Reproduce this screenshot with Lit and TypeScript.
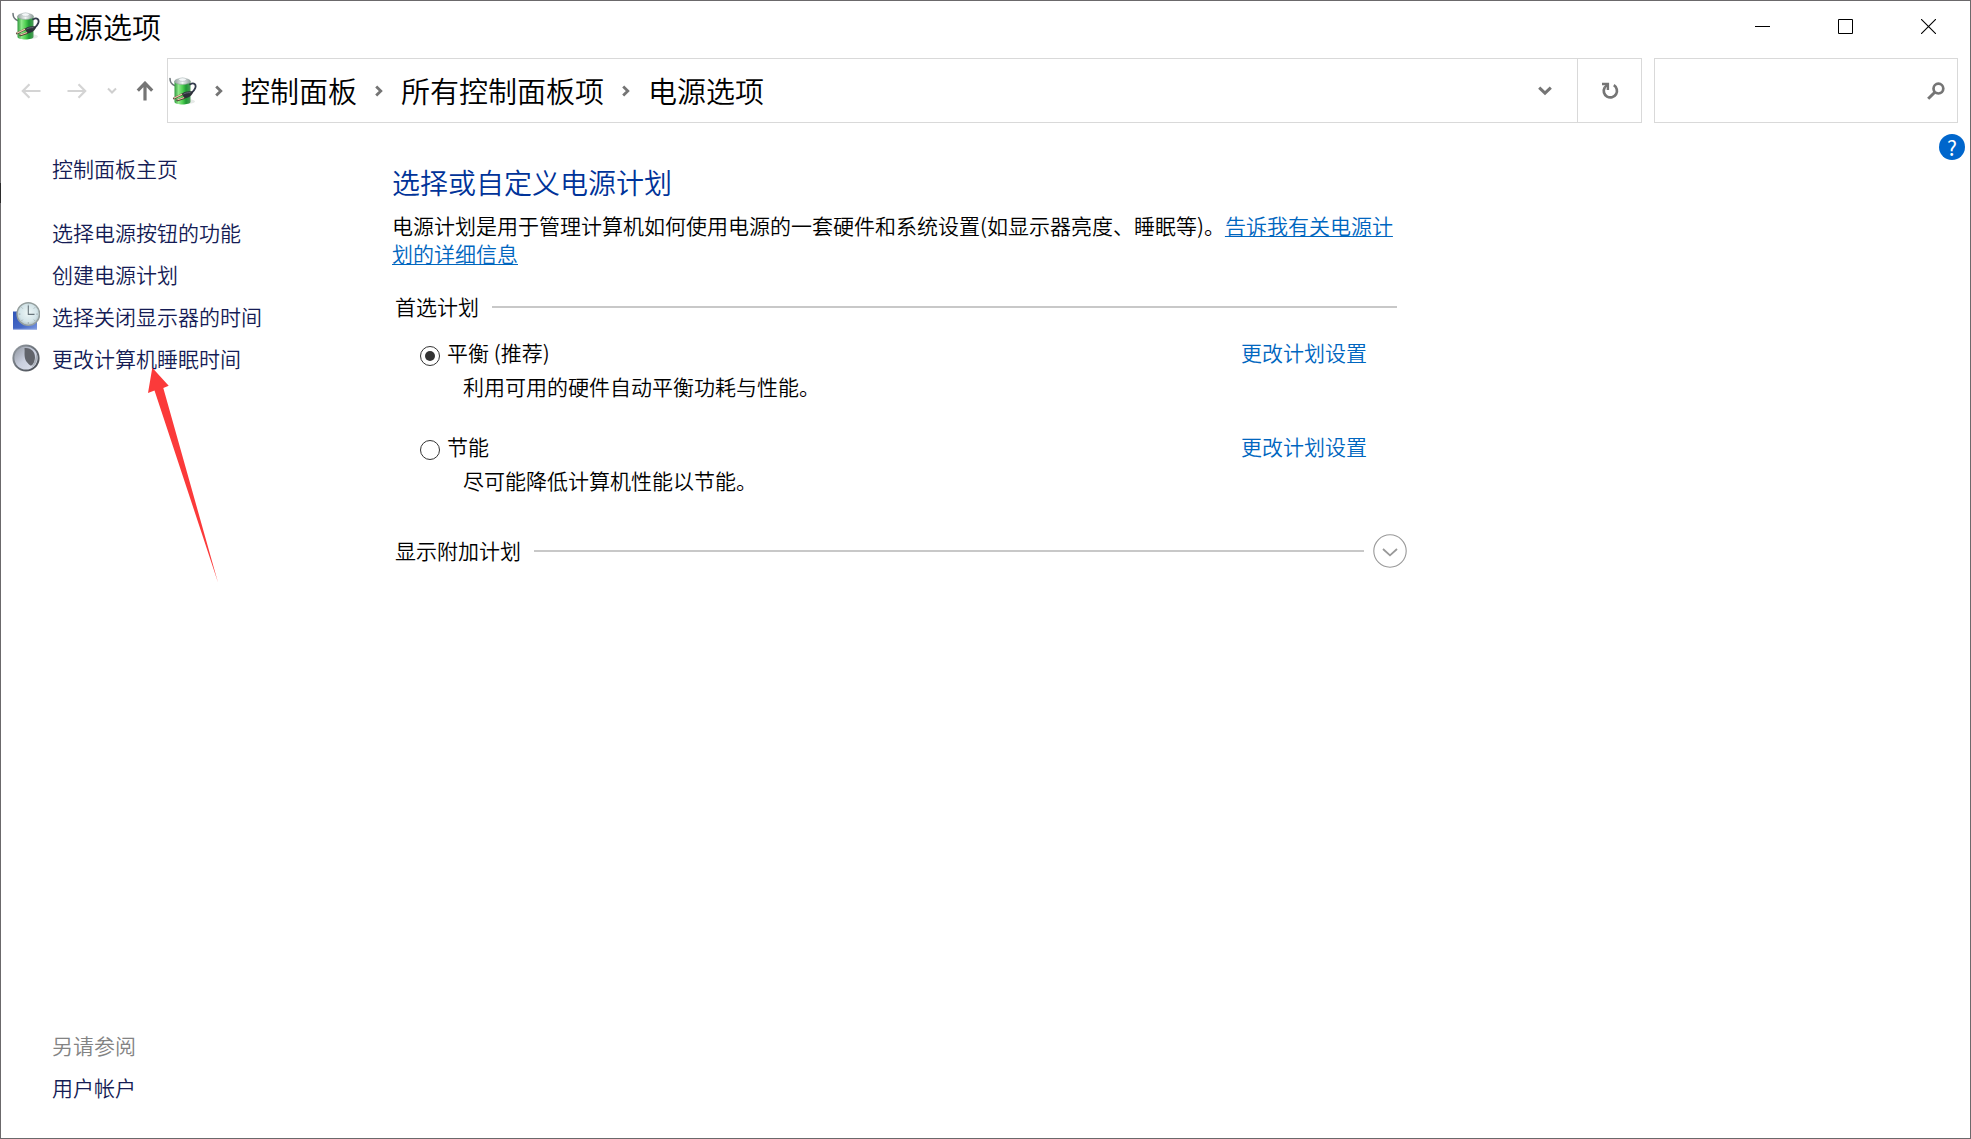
import { LitElement, html, css } from "lit";
import { customElement, state } from "lit/decorators.js";

interface Plan {
  id: string;
  name: string;
  description: string;
}

const PLANS: Plan[] = [
  { id: "balanced", name: "平衡 (推荐)", description: "利用可用的硬件自动平衡功耗与性能。" },
  { id: "saver", name: "节能", description: "尽可能降低计算机性能以节能。" },
];

const CRUMBS = ["控制面板", "所有控制面板项", "电源选项"];

const powerIcon = (uid: string) => html`
  <svg width="28" height="28" viewBox="0 0 28 28" aria-hidden="true">
    <defs>
      <linearGradient id=${"body-" + uid} x1="0" x2="1" y1="0" y2="0">
        <stop offset="0" stop-color="#2f9a3c" />
        <stop offset="0.25" stop-color="#8fe88a" />
        <stop offset="0.5" stop-color="#4fd052" />
        <stop offset="0.72" stop-color="#1f9a34" />
        <stop offset="1" stop-color="#4c9a58" />
      </linearGradient>
      <linearGradient id=${"cap-" + uid} x1="0" x2="1" y1="0" y2="0">
        <stop offset="0" stop-color="#8fa09a" />
        <stop offset="0.5" stop-color="#f2f6f5" />
        <stop offset="1" stop-color="#8c9a98" />
      </linearGradient>
    </defs>
    <ellipse cx="20" cy="24.5" rx="6" ry="2.2" fill="#e6e9e7" />
    <path d="M1 1.5C1 5 3 7.5 5.6 8.5" fill="none" stroke="#6c7478" stroke-width="1.5" stroke-linecap="round" />
    <path d="M5.5 4.5V24.8C5.5 28.4 21.5 28.4 21.5 24.8V4.5Z" fill=${"url(#body-" + uid + ")"} />
    <ellipse cx="13.5" cy="4.4" rx="8" ry="3" fill=${"url(#cap-" + uid + ")"} stroke="#93a19d" stroke-width="0.6" />
    <ellipse cx="13.5" cy="2.6" rx="3.8" ry="1.8" fill="#f4f7f8" stroke="#a5b1b1" stroke-width="0.5" />
    <path d="M21 7.4C25 5 27.6 7.6 26.2 11.2C25.3 13.4 24.6 14.4 22.5 16" fill="none" stroke="#333a4c" stroke-width="1.8" stroke-linecap="round" />
    <path d="M12.8 17C15 14.5 20 13.8 24 14.8C23.6 18 20.2 21 15.8 21.4Z" fill="#2d3038" />
    <path d="M14.4 17.2C16.2 15.9 19 15.5 21.5 15.7" fill="none" stroke="#727985" stroke-width="0.8" />
    <path d="M13 17.4L5 21.4M15 21L8.4 23.2" fill="none" stroke="#4b3a30" stroke-width="2.1" stroke-linecap="round" />
    <path d="M12.6 17.4L5.2 21M14.6 20.7L8.8 22.7" fill="none" stroke="#ecc9aa" stroke-width="1.2" stroke-linecap="round" />
  </svg>
`;

const clockIcon = html`
  <svg width="28" height="28" viewBox="0 0 28 28" aria-hidden="true">
    <defs>
      <linearGradient id="screen" x1="0" x2="1" y1="0" y2="1">
        <stop offset="0" stop-color="#2f55b8" />
        <stop offset="0.6" stop-color="#4669c6" />
        <stop offset="1" stop-color="#7f9be0" />
      </linearGradient>
      <radialGradient id="dial" cx="0.5" cy="0.45" r="0.55">
        <stop offset="0" stop-color="#eef7f7" />
        <stop offset="0.7" stop-color="#d3e4e8" />
        <stop offset="1" stop-color="#aebec3" />
      </radialGradient>
    </defs>
    <path d="M1 9.5H25V27.5H1Z" fill="url(#screen)" />
    <path d="M1 27.3H25" stroke="#9fb2e4" stroke-width="1" />
    <circle cx="16.3" cy="12.1" r="11.3" fill="url(#dial)" stroke="#959f9e" stroke-width="1.4" />
    <path d="M16.3 2.6V4.2M16.3 20.2V21.8M6.8 12.1H8.4M24.2 12.1H25.8M9.6 5.4L10.7 6.5M23 5.4L21.9 6.5M9.6 18.8L10.7 17.7M23 18.8L21.9 17.7" stroke="#8f9ca1" stroke-width="0.8" />
    <path d="M16.3 3.8V12.4H22.5" fill="none" stroke="#67747a" stroke-width="1.1" />
  </svg>
`;

const moonIcon = html`
  <svg width="28" height="28" viewBox="0 0 28 28" aria-hidden="true">
    <defs>
      <linearGradient id="rim" x1="0" x2="1" y1="0" y2="1">
        <stop offset="0" stop-color="#9aa1a8" />
        <stop offset="0.5" stop-color="#6a7078" />
        <stop offset="1" stop-color="#42474d" />
      </linearGradient>
      <linearGradient id="moon" x1="0" x2="1" y1="0" y2="1">
        <stop offset="0" stop-color="#8f959e" />
        <stop offset="0.5" stop-color="#c9cfde" />
        <stop offset="1" stop-color="#dfe3ee" />
      </linearGradient>
    </defs>
    <circle cx="14" cy="14" r="13.6" fill="url(#rim)" />
    <circle cx="14" cy="14" r="11.6" fill="url(#moon)" />
    <path d="M12.4 4.2C19 3.4 23.2 8 23 13.6C22.7 18.4 21 21 19 21.8C15.6 19.2 12.8 16.6 12.6 11.4C12.4 8.8 12.9 6.4 12.4 4.2Z" fill="#61646b" />
    <path d="M24.4 9.2C26.2 14.6 24.4 20.8 19.4 23.6C22 19.6 23.6 15 24.4 9.2Z" fill="#a9afb8" />
  </svg>
`;

const TASKS = [
  { text: "选择电源按钮的功能", icon: null },
  { text: "创建电源计划", icon: null },
  { text: "选择关闭显示器的时间", icon: clockIcon },
  { text: "更改计算机睡眠时间", icon: moonIcon },
];

const crumbChevron = html`
  <svg class="crumb-sep" width="8" height="12" viewBox="0 0 8 12" aria-hidden="true">
    <path d="M1.2 1.4L5.8 6L1.2 10.6" fill="none" stroke="#757575" stroke-width="2.8" />
  </svg>
`;

@customElement("app-root")
export class AppRoot extends LitElement {
  @state() private selected = "balanced";

  static styles = css`
    :host {
      display: block;
      font-family: "Noto Sans CJK SC", sans-serif;
      font-size: 21px;
      font-weight: 350;
      line-height: 28px;
      color: #000;
    }
    * {
      box-sizing: border-box;
    }
    button,
    input {
      font: inherit;
      color: inherit;
      background: none;
      border: 0;
      margin: 0;
      padding: 0;
    }
    svg {
      display: block;
      flex: none;
    }
    a {
      color: #0066bf;
      text-decoration: none;
    }
    .window {
      position: relative;
      display: flex;
      flex-direction: column;
      min-height: 100vh;
      background: #fff;
      border: 1px solid #6b696b;
    }
    .edge {
      position: absolute;
      left: -1px;
      top: 182px;
      width: 1px;
      height: 20px;
      background: #2b2b2b;
    }
    .titlebar {
      display: flex;
      align-items: center;
      height: 50px;
      padding-left: 11px;
    }
    .title {
      flex: 1;
      margin: 0 0 0 5px;
      font-size: 29px;
      line-height: 40px;
    }
    .caption {
      display: flex;
      align-items: center;
      justify-content: center;
      width: 83px;
      height: 50px;
    }
    .navbar {
      display: flex;
      align-items: stretch;
      height: 65px;
      margin-top: 7px;
      padding: 0 12px 0 7px;
    }
    .nav {
      display: flex;
      align-items: center;
      justify-content: center;
      width: 46px;
    }
    .nav.recent {
      width: 23px;
    }
    .nav.up {
      width: 44px;
    }
    .address {
      flex: 1;
      display: flex;
      align-items: center;
      border: 1px solid #d9d9d9;
      padding-left: 1px;
    }
    .crumbs {
      flex: 1;
      display: flex;
      align-items: center;
      margin: 0;
      padding: 0;
      list-style: none;
    }
    .crumbs li {
      display: flex;
      align-items: center;
    }
    .crumb-sep {
      margin: 0 18px;
    }
    .crumbs button {
      padding-bottom: 2px;
      font-size: 29px;
      line-height: 40px;
    }
    .drop,
    .refresh {
      display: flex;
      align-items: center;
      justify-content: center;
      width: 64px;
      height: 100%;
    }
    .refresh {
      border-left: 1px solid #d9d9d9;
    }
    .search {
      display: flex;
      align-items: center;
      width: 304px;
      margin-left: 12px;
      padding-right: 12px;
      border: 1px solid #d9d9d9;
    }
    .search input {
      flex: 1;
      min-width: 0;
      height: 100%;
      padding: 0 12px;
      outline: none;
    }
    .body {
      flex: 1;
      display: flex;
    }
    .sidebar {
      display: flex;
      flex-direction: column;
      justify-content: space-between;
      width: 391px;
      padding: 24px 0 30px 11px;
    }
    .sidebar a,
    .also {
      display: flex;
      align-items: center;
      height: 42px;
      margin: 0;
      padding-left: 40px;
      color: #151c55;
    }
    .sidebar .with-icon {
      gap: 12px;
      padding-left: 0;
    }
    .sidebar .home {
      margin-bottom: 22px;
    }
    .sidebar .also {
      color: #838383;
    }
    .main {
      flex: 1;
      max-width: 1015px;
      padding-top: 39px;
    }
    h1 {
      margin: 0 0 9px;
      font-size: 28px;
      line-height: 40px;
      font-weight: inherit;
      color: #003399;
    }
    .intro {
      margin: 0 10px 26px 0;
    }
    .intro a {
      text-decoration: underline;
      text-decoration-thickness: 1px;
      text-underline-offset: 2px;
    }
    .group {
      display: flex;
      align-items: center;
      gap: 13px;
      padding-left: 3px;
    }
    .group h2 {
      margin: 0;
      padding-bottom: 2px;
      font-size: 21px;
      line-height: 26px;
      font-weight: inherit;
    }
    .rule {
      flex: 1;
      height: 2px;
      background: #c8c8c8;
    }
    .preferred {
      padding-right: 10px;
    }
    .plans {
      display: flex;
      flex-direction: column;
      gap: 32px;
      margin: 0;
      border: 0;
      padding: 17px 40px 40px 28px;
    }
    .plan {
      display: grid;
      grid-template-columns: 20px 1fr auto;
      column-gap: 7px;
      row-gap: 6px;
      align-items: center;
    }
    .plan input {
      appearance: none;
      display: grid;
      place-items: center;
      width: 20px;
      height: 20px;
      margin-top: 8px;
      border: 1px solid #333;
      border-radius: 50%;
    }
    .plan input:checked::before {
      content: "";
      width: 10px;
      height: 10px;
      border-radius: 50%;
      background: #333;
    }
    .plan p {
      grid-column: 2 / 4;
      margin: 0;
      padding-left: 16px;
    }
    .more {
      gap: 9px;
    }
    .more h2 {
      margin-right: 4px;
    }
    .help {
      display: flex;
      align-items: center;
      justify-content: center;
      width: 26px;
      height: 26px;
      margin: 11px 5px 0 auto;
      border-radius: 50%;
      background: #0066cc;
      color: #fff;
      font-weight: 400;
    }
    .pointer {
      position: absolute;
      left: 146px;
      top: 366px;
      pointer-events: none;
    }
  `;

  render() {
    return html`
      <div class="window">
        <span class="edge"></span>
        <header class="titlebar">
          ${powerIcon("title")}
          <div class="title">电源选项</div>
          <button class="caption" aria-label="最小化">
            <svg width="15" height="15" viewBox="0 0 15 15"><path d="M0 7.5H15" stroke="#000" /></svg>
          </button>
          <button class="caption" aria-label="最大化">
            <svg width="15" height="15" viewBox="0 0 15 15"><path d="M.5 .5H14.5V14.5H.5Z" fill="none" stroke="#000" /></svg>
          </button>
          <button class="caption" aria-label="关闭">
            <svg width="15" height="15" viewBox="0 0 15 15"><path d="M0 0L15 15M15 0L0 15" stroke="#000" stroke-width="1.1" /></svg>
          </button>
        </header>

        <nav class="navbar">
          <button class="nav" aria-label="后退" disabled>
            <svg width="20" height="16" viewBox="0 0 20 16"><path d="M19.5 8H2M8.5 1.2L1.8 8L8.5 14.8" fill="none" stroke="#d4d4d4" stroke-width="2.2" /></svg>
          </button>
          <button class="nav" aria-label="前进" disabled>
            <svg width="20" height="16" viewBox="0 0 20 16"><path d="M.5 8H18M11.5 1.2L18.2 8L11.5 14.8" fill="none" stroke="#d4d4d4" stroke-width="2.2" /></svg>
          </button>
          <button class="nav recent" aria-label="最近浏览的位置">
            <svg width="10" height="8" viewBox="0 0 10 8"><path d="M1 1.5L5 5.5L9 1.5" fill="none" stroke="#cfcfcf" stroke-width="2" /></svg>
          </button>
          <button class="nav up" aria-label="上移">
            <svg width="18" height="20" viewBox="0 0 18 20"><path d="M9 19.5V3M1.8 9.6L9 2.2L16.2 9.6" fill="none" stroke="#757575" stroke-width="3.2" /></svg>
          </button>
          <div class="address">
            ${powerIcon("address")}
            <ol class="crumbs">
              ${CRUMBS.map((c) => html`<li>${crumbChevron}<button>${c}</button></li>`)}
            </ol>
            <button class="drop" aria-label="展开地址列表">
              <svg width="14" height="10" viewBox="0 0 14 10"><path d="M1.2 1.6L7 7.2L12.8 1.6" fill="none" stroke="#757575" stroke-width="3" /></svg>
            </button>
            <button class="refresh" aria-label="刷新">
              <svg width="18" height="18" viewBox="0 0 18 18">
                <path d="M12.8 3.2A6.6 6.6 0 1 1 3.6 5.6" fill="none" stroke="#757575" stroke-width="2.7" />
                <path d="M1 2H6.9V8" fill="none" stroke="#757575" stroke-width="2.4" />
                <path d="M3.4 5.8L6.4 2.6" stroke="#757575" stroke-width="2.4" />
              </svg>
            </button>
          </div>
          <div class="search">
            <input type="search" aria-label="搜索" />
            <svg width="18" height="18" viewBox="0 0 18 18" aria-hidden="true">
              <circle cx="11.4" cy="6.6" r="4.9" fill="none" stroke="#757575" stroke-width="2.7" />
              <path d="M7.8 10.2L1.2 16.8" stroke="#757575" stroke-width="3" />
            </svg>
          </div>
        </nav>

        <div class="body">
          <aside class="sidebar">
            <div>
              <a class="home" href="#home">控制面板主页</a>
              ${TASKS.map((t) =>
                t.icon
                  ? html`<a class="with-icon" href="#task">${t.icon}<span>${t.text}</span></a>`
                  : html`<a href="#task">${t.text}</a>`
              )}
            </div>
            <div>
              <p class="also">另请参阅</p>
              <a href="#accounts">用户帐户</a>
            </div>
          </aside>

          <main class="main">
            <h1>选择或自定义电源计划</h1>
            <p class="intro">电源计划是用于管理计算机如何使用电源的一套硬件和系统设置(如显示器亮度、睡眠等)。<a href="#more">告诉我有关电源计划的详细信息</a></p>
            <div class="group preferred">
              <h2>首选计划</h2>
              <span class="rule"></span>
            </div>
            <fieldset class="plans" aria-label="首选计划">
              ${PLANS.map(
                (p) => html`
                  <div class="plan">
                    <input
                      type="radio"
                      name="plan"
                      id=${p.id}
                      .checked=${this.selected === p.id}
                      @change=${() => (this.selected = p.id)}
                    />
                    <label for=${p.id}>${p.name}</label>
                    <a href="#settings">更改计划设置</a>
                    <p>${p.description}</p>
                  </div>
                `
              )}
            </fieldset>
            <div class="group more">
              <h2>显示附加计划</h2>
              <span class="rule"></span>
              <button aria-label="显示附加计划">
                <svg width="34" height="34" viewBox="0 0 34 34">
                  <circle cx="17" cy="17" r="16.2" fill="none" stroke="#999" stroke-width="1.1" />
                  <path d="M10 15L17 21.4L24 15" fill="none" stroke="#999" stroke-width="1.8" />
                </svg>
              </button>
            </div>
          </main>

          <button class="help" aria-label="帮助">?</button>
        </div>

        <svg class="pointer" width="74" height="218" viewBox="0 0 74 218" aria-hidden="true">
          <path d="M5.3 0.7L21.7 18.7L16.3 21L71 215.5L7.5 23.5L1 26Z" fill="#fb3a3a" />
        </svg>
      </div>
    `;
  }
}
